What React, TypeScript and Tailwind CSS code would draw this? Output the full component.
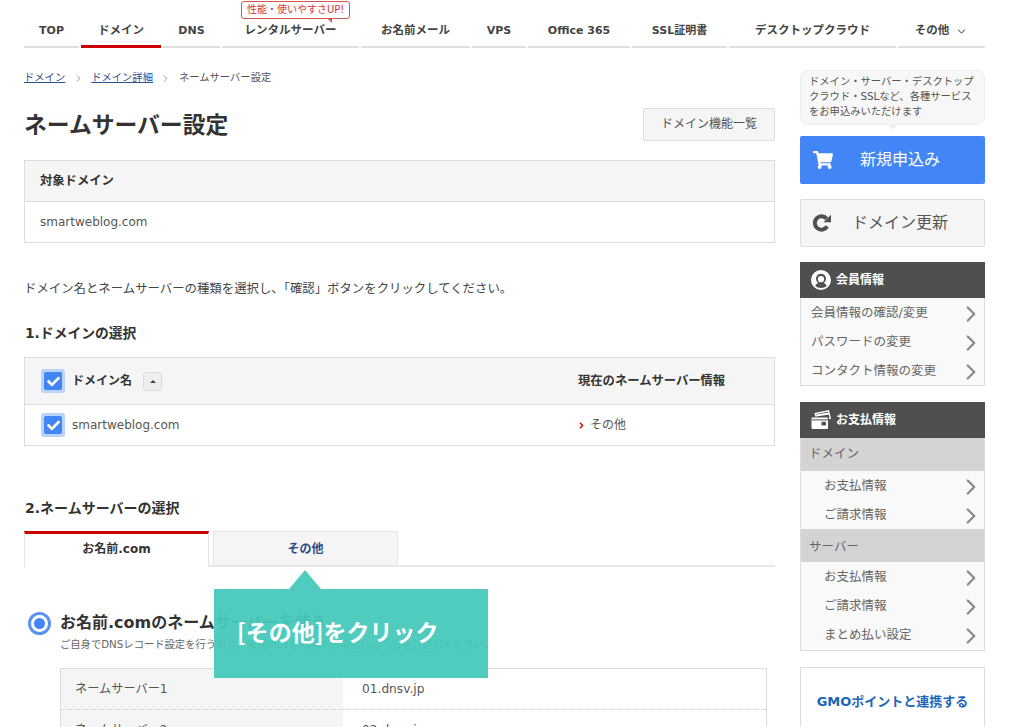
import type { ReactNode } from "react";
import { ChevronDown, ChevronRight } from "lucide-react";
import { FaCheck, FaShoppingCart } from "react-icons/fa";

const navItems = [
  { label: "TOP", w: "w-[55px] text-[11px]" },
  { label: "ドメイン", w: "w-[80px] text-[11.5px]", active: true },
  { label: "DNS", w: "w-[57px] text-[11px]" },
  { label: "レンタルサーバー", w: "w-[137px] text-[11.5px]", badge: true },
  { label: "お名前メール", w: "w-[109px] text-[11.5px]" },
  { label: "VPS", w: "w-[54px] text-[11px]" },
  { label: "Office 365", w: "w-[102px] text-[11px]" },
  { label: "SSL証明書", w: "w-[95px] text-[11px]" },
  { label: "デスクトップクラウド", w: "w-[167px] text-[11.5px]" },
  { label: "その他", w: "w-[87px] text-[11.5px]", more: true },
];

const Check = () => (
  <span className="flex h-6 w-6 items-center justify-center rounded-[3px] bg-[#b9d3fd]">
    <span className="flex h-[18px] w-[18px] items-center justify-center rounded-[2px] bg-[#4285f4]">
      <FaCheck className="h-[13px] w-[13px] text-white" />
    </span>
  </span>
);

const SideRow = ({ label, sub }: { label: string; sub?: boolean }) => (
  <div className={`flex h-[29px] items-center justify-between pt-[2px] text-[12.5px] text-[#666] ${sub ? "pl-[23px]" : "pl-[10px]"}`}>
    <span>{label}</span>
    <ChevronRight className="h-[26px] w-[26px] text-[#888]" strokeWidth={2} />
  </div>
);

const SideHead = ({ icon, label }: { icon: ReactNode; label: string }) => (
  <div className="flex h-[36px] items-center gap-[5px] bg-[#4f4f4f] pl-[11px] text-[12px] font-bold text-white">
    {icon}
    <span>{label}</span>
  </div>
);

const SideGroup = ({ label, low }: { label: string; low?: boolean }) => (
  <div className={`flex h-[33px] items-center bg-[#d4d4d4] pl-[8px] text-[12.5px] text-[#666] ${low ? "pt-[3px]" : ""}`}>{label}</div>
);

const UserIcon = () => (
  <svg viewBox="0 0 20 20" className="h-[20px] w-[20px]">
    <circle cx="10" cy="10" r="10" fill="white" />
    <circle cx="10" cy="8.8" r="5" fill="#4f4f4f" />
    <circle cx="10" cy="9.2" r="3.1" fill="white" />
    <path d="M4.2 16 Q5.2 13 8 12.8 L12 12.8 Q14.8 13 15.8 16 Q13.5 18 10 18 Q6.5 18 4.2 16 Z" fill="#4f4f4f" />
  </svg>
);

const CardsIcon = () => (
  <svg viewBox="0 0 20 20" className="h-[20px] w-[20px]">
    <path d="M5 6.5 L4.2 3.6 L17.5 0.8 L19.2 8.2 L18 8.5" fill="none" stroke="white" strokeWidth="1.3" />
    <path d="M5 4.6 L17.8 2.4 L18.4 4.4 L5.4 6.6 Z" fill="white" />
    <rect x="0.5" y="7.5" width="16.5" height="11.5" rx="1" fill="white" />
    <rect x="0.5" y="9.4" width="16.5" height="1" fill="#4f4f4f" />
    <rect x="10.5" y="11.8" width="4.5" height="3.6" fill="#4f4f4f" />
  </svg>
);

const RefreshIcon = () => (
  <svg viewBox="0 0 20 20" className="h-[20px] w-[20px]">
    <path d="M15.2 13.4 A6.7 6.7 0 1 1 14.6 5.6" fill="none" stroke="#4f4f4f" strokeWidth="4" />
    <path d="M11.5 9.2 L19 9.2 L19 1.8 Z" fill="#4f4f4f" />
  </svg>
);

export default function App() {
  return (
    <div className="relative h-[727px] overflow-hidden bg-white px-[24px] font-['DejaVu_Sans','Noto_Sans_CJK_JP',sans-serif] text-[#333]">
      {/* global nav */}
      <nav className="flex h-[48px] w-[961px] gap-[2px] pt-[13px]">
        {navItems.map((item) => (
          <div
            key={item.label}
            className={`relative flex h-[35px] items-center justify-center pt-[3px] font-bold text-[#444] ${item.w} ${
              item.active ? "border-b-[3px] border-[#cc0000]" : "border-b-[2px] border-[#dedede]"
            }`}
          >
            {item.label}
            {item.more && <ChevronDown className="ml-[6px] h-[13px] w-[13px] text-[#777]" />}
            {item.badge && (
              <span className="absolute left-[19px] top-[-12px] rounded-[3px] border border-[#d9534f] bg-white px-[5px] text-[10px] leading-[16px] font-normal whitespace-nowrap text-[#d9343a]">
                性能・使いやすさUP!
                <span className="absolute right-[17px] bottom-[-5px] h-0 w-0 border-t-[5px] border-l-[5px] border-t-[#d9534f] border-l-transparent" />
              </span>
            )}
          </div>
        ))}
      </nav>

      <div className="flex gap-[25px]">
        {/* main column */}
        <main className="w-[751px] shrink-0">
          <div className="mt-[23px] flex h-[14px] items-center text-[10.3px] text-[#555]">
            <span className="text-[#33508f] underline">ドメイン</span>
            <ChevronRight className="mx-[7.5px] h-[11px] w-[11px] text-[#888]" />
            <span className="text-[#33508f] underline">ドメイン詳細</span>
            <ChevronRight className="mx-[7.5px] h-[11px] w-[11px] text-[#888]" />
            <span>ネームサーバー設定</span>
          </div>

          <div className="mt-[19px] flex h-[40px] items-center justify-between">
            <h1 className="pt-[2px] text-[22.8px] font-bold text-[#333]">ネームサーバー設定</h1>
            <div className="flex h-[33px] w-[132px] items-center justify-center rounded-[2px] border border-[#ddd] bg-[#f5f5f5] text-[12px] text-[#555]">
              ドメイン機能一覧
            </div>
          </div>

          <div className="mt-[16px] border border-[#ddd]">
            <div className="flex h-[41px] items-center border-b border-[#ddd] bg-[#f5f5f5] pl-[15px] text-[12.3px] font-bold">対象ドメイン</div>
            <div className="flex h-[40px] items-center pl-[15px] text-[12px] text-[#555]">smartweblog.com</div>
          </div>

          <p className="mt-[37px] text-[12.4px] leading-[18px] text-[#444]">ドメイン名とネームサーバーの種類を選択し、「確認」ボタンをクリックしてください。</p>

          <h2 className="mt-[26px] pl-px text-[13.8px] leading-[18px] font-bold">1.ドメインの選択</h2>

          <div className="mt-[15px] border border-[#ddd]">
            <div className="flex h-[47px] items-center border-b border-[#ddd] bg-[#f5f5f5] pl-[16px]">
              <Check />
              <span className="ml-[7px] text-[12px] font-bold">ドメイン名</span>
              <span className="ml-[11px] flex h-[19px] w-[19px] items-center justify-center rounded-[3px] border border-[#ddd] bg-[#eee]">
                <span className="h-0 w-0 border-x-[3px] border-b-[3px] border-x-transparent border-b-[#444]" />
              </span>
              <span className="ml-[416px] text-[12.3px] font-bold">現在のネームサーバー情報</span>
            </div>
            <div className="flex h-[40px] items-center pl-[16px] text-[12px] text-[#555]">
              <Check />
              <span className="ml-[7px] w-[505px]">smartweblog.com</span>
              <ChevronRight className="mr-[4px] h-[9px] w-[9px] text-[#cc0000]" strokeWidth={4} />
              <span>その他</span>
            </div>
          </div>

          <h2 className="mt-[53px] pl-px text-[14px] leading-[18px] font-bold">2.ネームサーバーの選択</h2>

          <div className="mt-[14px] flex h-[36px] border-b-[2px] border-[#e8e8e8]">
            <div className="-mb-[2px] flex h-[36px] w-[185px] items-center justify-center border-x border-t-[3px] border-x-[#e4e4e4] border-t-[#cc0000] bg-white pb-[3px] text-[12px] font-bold">
              お名前.com
            </div>
            <div className="ml-[4px] flex h-[34px] w-[185px] items-center justify-center border border-b-0 border-[#e8e8e8] bg-[#f5f5f5] text-[12px] font-bold text-[#2f4a8a]">
              その他
            </div>
          </div>

          <div className="mt-[44px] ml-[4px] flex h-[24px] items-center gap-[9px]">
            <span className="flex h-[23px] w-[23px] items-center justify-center rounded-full border-[3px] border-[#5b93f5] bg-white">
              <span className="h-[11px] w-[11px] rounded-full bg-[#4285f4]" />
            </span>
            <span className="text-[16px] font-bold">お名前.comのネームサーバーを使う</span>
          </div>
          <p className="mt-[2px] ml-[36px] text-[10.3px] leading-[15px] whitespace-nowrap text-[#666]">
            ご自身でDNSレコード設定を行う場合、転送Plusを利用する場合はこちらをご選択ください。
          </p>

          <div className="mt-[16px] ml-[36px] w-[707px] border border-[#ddd] text-[12.2px] text-[#555]">
            <div className="flex h-[41px] border-b border-dotted border-[#ccc]">
              <div className="flex w-[282px] items-center bg-[#f5f5f5] pl-[14px]">ネームサーバー1</div>
              <div className="flex items-center pl-[19px]">01.dnsv.jp</div>
            </div>
            <div className="flex h-[41px]">
              <div className="flex w-[282px] items-center bg-[#f5f5f5] pl-[14px]">ネームサーバー2</div>
              <div className="flex items-center pl-[19px]">02.dnsv.jp</div>
            </div>
          </div>
        </main>

        {/* sidebar */}
        <aside className="w-[185px] shrink-0 pt-[22px]">
          <div className="relative h-[55px] rounded-[8px] border border-[#eee] bg-[#f7f7f7] px-[8px] pt-[3px] text-[10.3px] leading-[15px] text-[#555]">
            ドメイン・サーバー・デスクトップクラウド・SSLなど、各種サービスをお申込みいただけます
            <span className="absolute bottom-[-6px] left-[86px] h-0 w-0 border-x-[6px] border-t-[6px] border-x-transparent border-t-[#f0f0f0]" />
          </div>

          <div className="mt-[11px] flex h-[48px] items-center rounded-[2px] bg-[#4285f4] pl-[13px] text-[16px] text-white">
            <FaShoppingCart className="h-[20px] w-[20px]" />
            <span className="ml-[27px]">新規申込み</span>
          </div>

          <div className="mt-[15px] flex h-[48px] items-center rounded-[2px] border border-[#ddd] bg-[#f5f5f5] pl-[11px] text-[16px] text-[#555]">
            <RefreshIcon />
            <span className="ml-[20px]">ドメイン更新</span>
          </div>

          <div className="mt-[15px] border-x border-b border-[#ddd] bg-[#f9f9f9]">
            <div className="-mx-px">
              <SideHead icon={<UserIcon />} label="会員情報" />
            </div>
            <SideRow label="会員情報の確認/変更" />
            <SideRow label="パスワードの変更" />
            <SideRow label="コンタクト情報の変更" />
          </div>

          <div className="mt-[16px] border-x border-b border-[#ddd] bg-[#f9f9f9] pb-px">
            <div className="-mx-px">
              <SideHead icon={<CardsIcon />} label="お支払情報" />
            </div>
            <SideGroup label="ドメイン" />
            <SideRow sub label="お支払情報" />
            <SideRow sub label="ご請求情報" />
            <SideGroup low label="サーバー" />
            <SideRow sub label="お支払情報" />
            <SideRow sub label="ご請求情報" />
            <SideRow sub label="まとめ払い設定" />
          </div>

          <div className="mt-[16px] flex h-[80px] items-start justify-center border border-[#ddd] pt-[24px] text-[13px] font-bold text-[#1b66b8]">
            GMOポイントと連携する
          </div>
        </aside>
      </div>

      {/* annotation callout over the page */}
      <div className="absolute left-[214px] top-[589px] flex h-[89px] w-[274px] items-center bg-[#46c9bb]/95 pb-[5px] pl-[23px] font-['Noto_Sans_CJK_JP',sans-serif] text-[23px] font-bold text-white">
        <span className="absolute left-[75px] top-[-19px] h-0 w-0 border-x-[16px] border-b-[19px] border-x-transparent border-b-[#46c9bb]/95" />
        [その他]をクリック
      </div>
    </div>
  );
}
